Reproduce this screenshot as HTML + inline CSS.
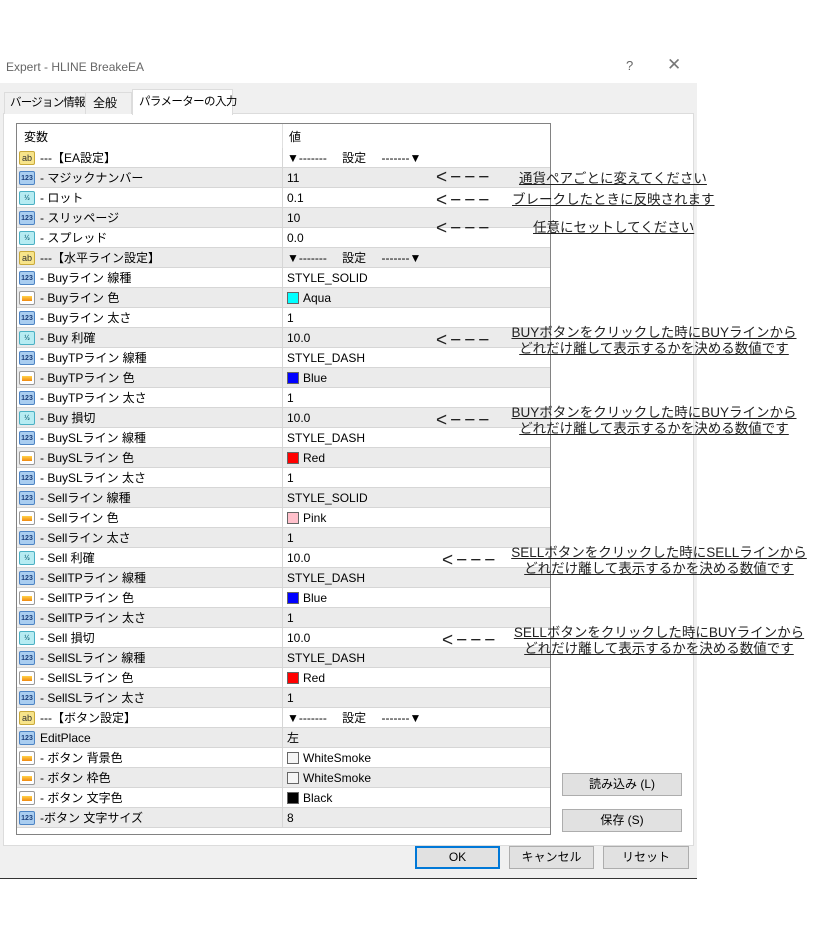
<!DOCTYPE html>
<html><head><meta charset="utf-8"><style>
*{margin:0;padding:0;box-sizing:border-box}
body{width:836px;height:934px;background:#fff;position:relative;overflow:hidden;font-family:"Liberation Sans","Noto Sans CJK JP",sans-serif;font-size:12px;color:#000}
.a{position:absolute}
.row{position:absolute;left:17px;width:533px;height:20px;border-bottom:1px solid #d6d6d6}
.row .n{position:absolute;left:23px;top:0;line-height:20px;white-space:nowrap}
.row .v{position:absolute;left:270px;top:0;line-height:20px;white-space:nowrap}
.row .d{position:absolute;left:265px;top:0;width:1px;height:20px;background:#d6d6d6}
.ic{position:absolute;left:2px;top:3px;width:16px;height:14px;border-radius:2px;font-size:7px;font-weight:bold;line-height:13px;text-align:center}
.ab{background:#f7e48a;border:1px solid #c9a93a;color:#333;font-size:9px;font-weight:normal}
.n1{background:#a9cdf0;border:1px solid #4d84c4;color:#1c3f7a}
.h{background:#b6ecf2;border:1px solid #4bb0c4;color:#1f6d80}
.c{background:#fff;border:1px solid #999}
.c:after{content:"";position:absolute;left:2px;top:4px;width:10px;height:5px;background:linear-gradient(#ffd24a,#f08a10)}
.sw{display:inline-block;width:12px;height:12px;border:1px solid #666;vertical-align:-2px;margin-right:4px}
.btn{position:absolute;background:#e1e1e1;border:1px solid #adadad;text-align:center;line-height:21px;font-size:12px}
.note{position:absolute;font-size:13.5px;line-height:16px;color:#222;text-decoration:underline;white-space:nowrap;text-align:center}
.arr{position:absolute;font-size:19px;line-height:20px;color:#222;white-space:nowrap;letter-spacing:3px}
.tab{position:absolute;line-height:20px;white-space:nowrap;font-size:12px}
</style></head><body>
<div class="a" style="left:6px;top:60px;color:#666;font-size:12px">Expert - HLINE BreakeEA</div>
<div class="a" style="left:626px;top:58px;color:#666;font-size:13px">?</div>
<div class="a" style="left:667px;top:55px;color:#777;font-size:17px">✕</div>
<div class="a" style="left:0;top:83px;width:697px;height:796px;background:#f0f0f0"></div>
<div class="a" style="left:0;top:878px;width:697px;height:1px;background:#333"></div>
<div class="a" style="left:3px;top:113px;width:691px;height:733px;background:#fff;border:1px solid #dcdcdc"></div>
<div class="tab" style="left:4px;top:92px;width:82px;height:22px;border:1px solid #dcdcdc;border-bottom:none;background:#f0f0f0;padding-left:5px;font-size:11.5px;letter-spacing:-0.8px;overflow:hidden">バージョン情報</div>
<div class="tab" style="left:85px;top:92px;width:47px;height:22px;border:1px solid #dcdcdc;border-bottom:none;background:#f0f0f0;padding-left:7px">全般</div>
<div class="tab" style="left:132px;top:89px;width:101px;height:26px;border:1px solid #dcdcdc;border-bottom:none;background:#fff;padding:2px 0 0 6px;font-size:11.5px;letter-spacing:-0.6px">パラメーターの入力</div>
<div class="a" style="left:16px;top:123px;width:535px;height:712px;border:1px solid #828282;background:#fff"></div>
<div class="a" style="left:24px;top:127px;line-height:20px">変数</div>
<div class="a" style="left:289px;top:127px;line-height:20px">値</div>
<div class="a" style="left:282px;top:124px;width:1px;height:24px;background:#e0e0e0"></div>
<div id="g"></div>
<div class="btn" style="left:562px;top:773px;width:120px;height:23px">読み込み (L)</div>
<div class="btn" style="left:562px;top:809px;width:120px;height:23px">保存 (S)</div>
<div class="btn" style="left:415px;top:846px;width:85px;height:23px;border:2px solid #0078d7;line-height:19px">OK</div>
<div class="btn" style="left:509px;top:846px;width:85px;height:23px">キャンセル</div>
<div class="btn" style="left:603px;top:846px;width:86px;height:23px">リセット</div>

<div class="arr" style="left:436px;top:168px">&lt;−−−</div>
<div class="note" style="left:519px;top:171px">通貨ペアごとに変えてください</div>
<div class="arr" style="left:436px;top:191px">&lt;−−−</div>
<div class="note" style="left:512px;top:192px">ブレークしたときに反映されます</div>
<div class="arr" style="left:436px;top:219px">&lt;−−−</div>
<div class="note" style="left:533px;top:220px">任意にセットしてください</div>
<div class="arr" style="left:436px;top:331px">&lt;−−−</div>
<div class="note" style="left:505px;top:325px;width:298px">BUYボタンをクリックした時にBUYラインから<br>どれだけ離して表示するかを決める数値です</div>
<div class="arr" style="left:436px;top:411px">&lt;−−−</div>
<div class="note" style="left:505px;top:405px;width:298px">BUYボタンをクリックした時にBUYラインから<br>どれだけ離して表示するかを決める数値です</div>
<div class="arr" style="left:442px;top:551px">&lt;−−−</div>
<div class="note" style="left:505px;top:545px;width:308px">SELLボタンをクリックした時にSELLラインから<br>どれだけ離して表示するかを決める数値です</div>
<div class="arr" style="left:442px;top:631px">&lt;−−−</div>
<div class="note" style="left:507px;top:625px;width:304px">SELLボタンをクリックした時にBUYラインから<br>どれだけ離して表示するかを決める数値です</div>
<script>
var S='▼-------　 設定　 -------▼';
var R=[['ab','---【EA設定】',S],['n1','- マジックナンバー','11'],['h','- ロット','0.1'],['n1','- スリッページ','10'],['h','- スプレッド','0.0'],
['ab','---【水平ライン設定】',S],['n1','- Buyライン 線種','STYLE_SOLID'],['c','- Buyライン 色','Aqua','#0ff'],['n1','- Buyライン 太さ','1'],['h','- Buy 利確','10.0'],
['n1','- BuyTPライン 線種','STYLE_DASH'],['c','- BuyTPライン 色','Blue','#00f'],['n1','- BuyTPライン 太さ','1'],['h','- Buy 損切','10.0'],
['n1','- BuySLライン 線種','STYLE_DASH'],['c','- BuySLライン 色','Red','#f00'],['n1','- BuySLライン 太さ','1'],
['n1','- Sellライン 線種','STYLE_SOLID'],['c','- Sellライン 色','Pink','#ffc0cb'],['n1','- Sellライン 太さ','1'],['h','- Sell 利確','10.0'],
['n1','- SellTPライン 線種','STYLE_DASH'],['c','- SellTPライン 色','Blue','#00f'],['n1','- SellTPライン 太さ','1'],['h','- Sell 損切','10.0'],
['n1','- SellSLライン 線種','STYLE_DASH'],['c','- SellSLライン 色','Red','#f00'],['n1','- SellSLライン 太さ','1'],
['ab','---【ボタン設定】',S],['n1','EditPlace','左'],['c','- ボタン 背景色','WhiteSmoke','#f5f5f5'],['c','- ボタン 枠色','WhiteSmoke','#f5f5f5'],['c','- ボタン 文字色','Black','#000'],['n1','-ボタン 文字サイズ','8']];
var T={ab:'ab',n1:'123',h:'½',c:''},h='';
R.forEach(function(r,i){var bg=i%2?'#ebebeb':'#fff';
h+='<div class="row" style="top:'+(148+i*20)+'px;background:'+bg+'"><div class="ic '+r[0]+'">'+T[r[0]]+'</div><div class="n">'+r[1]+'</div><div class="d"></div><div class="v">'+(r[3]?'<span class="sw" style="background:'+r[3]+'"></span>':'')+r[2]+'</div></div>';});
document.getElementById('g').innerHTML=h;
</script>
</body></html>
